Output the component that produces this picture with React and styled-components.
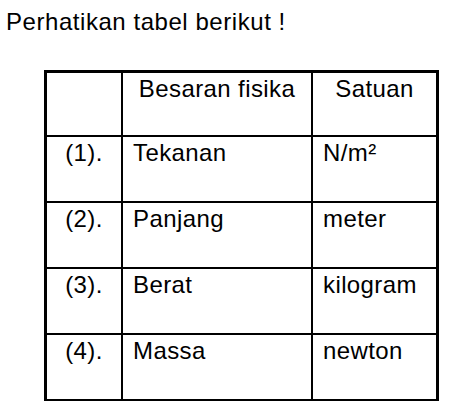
import React from "react";
import styled, { createGlobalStyle } from "styled-components";

const GlobalStyle = createGlobalStyle`
  html, body {
    margin: 0;
    padding: 0;
    background: #ffffff;
  }
  body {
    font-family: "Liberation Sans", Arial, sans-serif;
    color: #000000;
  }
  * {
    box-sizing: border-box;
  }
`;

const rows = [
  ["(1).", "Tekanan", "N/m²"],
  ["(2).", "Panjang", "meter"],
  ["(3).", "Berat", "kilogram"],
  ["(4).", "Massa", "newton"],
];

function App() {
  return (
    <>
      <GlobalStyle />
      <Page>
        <Title>Perhatikan tabel berikut !</Title>
        <Table>
          <Cell $center />
          <Cell $center>Besaran fisika</Cell>
          <Cell $center $last>Satuan</Cell>
          {rows.map(([no, name, unit]) => (
            <React.Fragment key={no}>
              <Cell $center>{no}</Cell>
              <Cell>{name}</Cell>
              <Cell $last>{unit}</Cell>
            </React.Fragment>
          ))}
        </Table>
      </Page>
    </>
  );
}

export default App;

const Page = styled.div`
  width: 452px;
  height: 412px;
  padding: 8px 0 0 6px;
  display: flex;
  flex-direction: column;
`;

const Title = styled.div`
  font-size: 24px;
  line-height: 28px;
  letter-spacing: 0.55px;
`;

const Table = styled.div`
  margin: 34px 0 0 38px;
  width: 395px;
  display: grid;
  grid-template-columns: 76px 190px 126px;
  grid-template-rows: 64px repeat(4, 66px);
  border-top: 3px solid #000;
  border-left: 3px solid #000;
`;

const Cell = styled.div`
  border-right: ${(p) => (p.$last ? "3px" : "2px")} solid #000;
  border-bottom: 2px solid #000;
  padding: 2px 10px 0;
  font-size: 24px;
  line-height: 28px;
  letter-spacing: 0.4px;
  text-align: ${(p) => (p.$center ? "center" : "left")};
  white-space: nowrap;
`;
